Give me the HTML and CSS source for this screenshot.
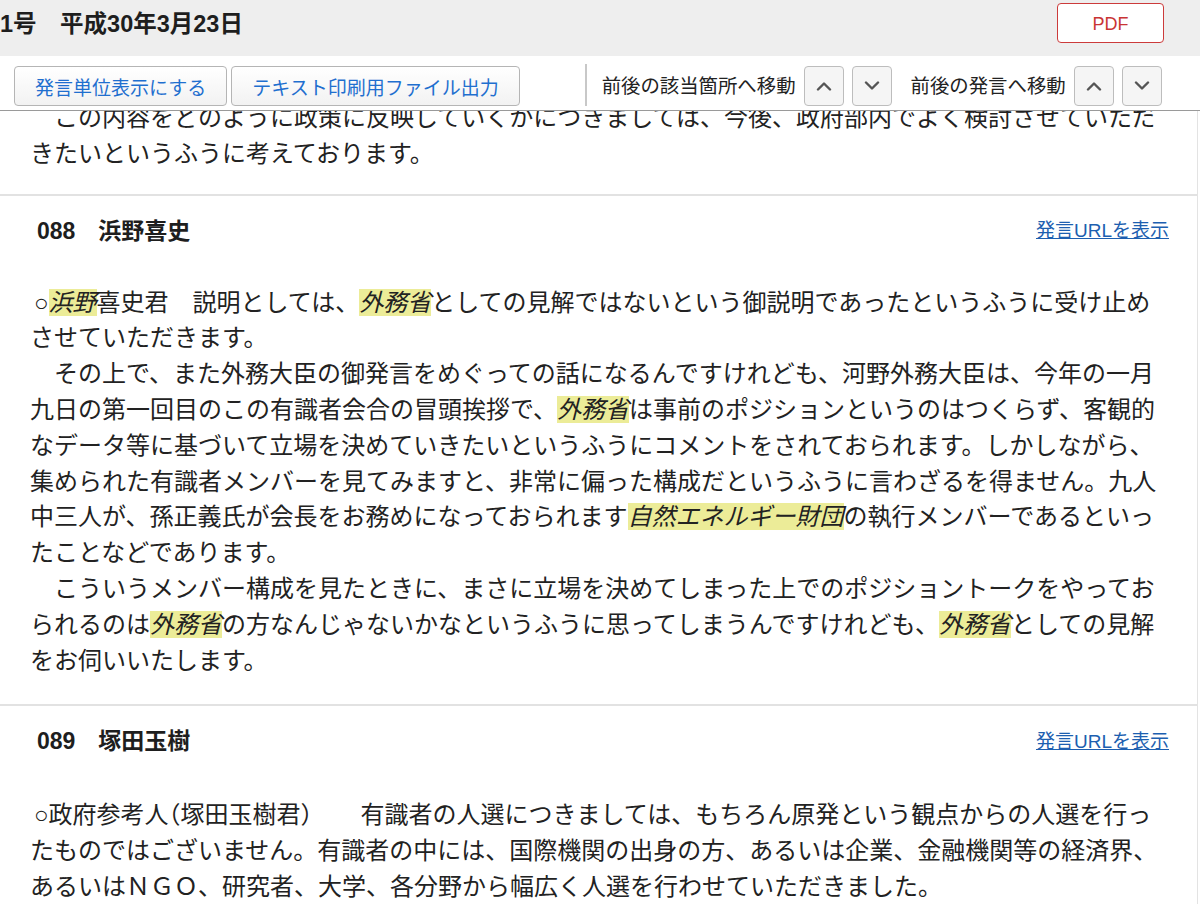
FILE: index.html
```html
<!DOCTYPE html>
<html lang="ja">
<head>
<meta charset="utf-8">
<title>会議録</title>
<link rel="stylesheet" href="styles.css">
</head>
<body>
<div class="page">
  <header class="titlebar">
    <h1 class="title">1号　平成30年3月23日</h1>
    <button class="pdf-btn">PDF</button>
  </header>
  <nav class="toolbar">
    <button class="tool-btn">発言単位表示にする</button>
    <button class="tool-btn">テキスト印刷用ファイル出力</button>
    <span class="vsep"></span>
    <span class="nav-label">前後の該当箇所へ移動</span>
    <button class="arrow-btn" aria-label="前へ"><svg viewBox="0 0 16 10" width="16" height="10"><path d="M2 8.5 L8 2.5 L14 8.5"/></svg></button>
    <button class="arrow-btn" aria-label="次へ"><svg viewBox="0 0 16 10" width="16" height="10"><path d="M2 1.5 L8 7.5 L14 1.5"/></svg></button>
    <span class="nav-label nav-label-2">前後の発言へ移動</span>
    <button class="arrow-btn" aria-label="前の発言へ"><svg viewBox="0 0 16 10" width="16" height="10"><path d="M2 8.5 L8 2.5 L14 8.5"/></svg></button>
    <button class="arrow-btn" aria-label="次の発言へ"><svg viewBox="0 0 16 10" width="16" height="10"><path d="M2 1.5 L8 7.5 L14 1.5"/></svg></button>
  </nav>
  <main class="content">
    <div class="speech speech-prev">
      <p class="speech-text">　この内容をどのように政策に反映していくかにつきましては、今後、政府部内でよく検討させていただきたいというふうに考えております。</p>
    </div>
    <section class="speech">
      <div class="speech-head">
        <h2 class="speaker">088　浜野喜史</h2>
        <a class="url-link" href="#">発言URLを表示</a>
      </div>
      <p class="speech-text"><span class="maru">○</span><em class="hl">浜野</em>喜史君　説明としては、<em class="hl">外務省</em>としての見解ではないという御説明であったというふうに受け止めさせていただきます。<br>　その上で、また外務大臣の御発言をめぐっての話になるんですけれども、河野外務大臣は、今年の一月九日の第一回目のこの有識者会合の冒頭挨拶で、<em class="hl">外務省</em>は事前のポジションというのはつくらず、客観的なデータ等に基づいて立場を決めていきたいというふうにコメントをされておられます。しかしながら、集められた有識者メンバーを見てみますと、非常に偏った構成だというふうに言わざるを得ません。九人中三人が、孫正義氏が会長をお務めになっておられます<em class="hl">自然エネルギー財団</em>の執行メンバーであるといったことなどであります。<br>　こういうメンバー構成を見たときに、まさに立場を決めてしまった上でのポジショントークをやっておられるのは<em class="hl">外務省</em>の方なんじゃないかなというふうに思ってしまうんですけれども、<em class="hl">外務省</em>としての見解をお伺いいたします。</p>
    </section>
    <section class="speech">
      <div class="speech-head">
        <h2 class="speaker">089　塚田玉樹</h2>
        <a class="url-link" href="#">発言URLを表示</a>
      </div>
      <p class="speech-text"><span class="maru">○</span>政府参考人<span class="paren">（</span>塚田玉樹君<span class="paren">）</span>　　有識者の人選につきましては、もちろん原発という観点からの人選を行ったものではございません。有識者の中には、国際機関の出身の方、あるいは企業、金融機関等の経済界、あるいはＮＧＯ、研究者、大学、各分野から幅広く人選を行わせていただきました。</p>
    </section>
  </main>
</div>
</body>
</html>
```

FILE: styles.css
```css
* {
  box-sizing: border-box;
}

html,
body {
  margin: 0;
  height: 100%;
  overflow: hidden;
  background: #fff;
}

body {
  font-family: "Liberation Sans", "Noto Sans CJK JP", sans-serif;
  color: #222;
}

.page {
  width: 1200px;
  height: 904px;
  display: flex;
  flex-direction: column;
}

.titlebar {
  flex: none;
  height: 56px;
  background: #eeeeee;
  display: flex;
  justify-content: space-between;
  align-items: flex-start;
  padding-right: 36px;
}

.title {
  margin: 0;
  font-size: 23.5px;
  font-weight: bold;
  line-height: 48px;
  white-space: nowrap;
  color: #1e1e1e;
}

.pdf-btn {
  margin-top: 3px;
  width: 107px;
  height: 40px;
  background: #fff;
  border: 1px solid #cc3b3b;
  border-radius: 4px;
  color: #c93434;
  font-size: 18px;
  font-family: inherit;
  padding: 2px 0 0 0;
}

.toolbar {
  flex: none;
  height: 55px;
  border-bottom: 1px solid #9a9a9a;
  display: flex;
  align-items: flex-start;
  padding: 10px 0 0 14px;
  background: #fff;
}

.tool-btn {
  height: 40px;
  padding: 0 20px;
  margin-right: 4px;
  border: 1px solid #b5b5b5;
  border-radius: 4px;
  background: linear-gradient(#ffffff, #f2f2f2);
  color: #1f6fcf;
  font-size: 19px;
  font-family: inherit;
}

.vsep {
  width: 2px;
  height: 42px;
  background: #c8c8c8;
  margin: -2px 15px 0 61px;
}

.nav-label {
  font-size: 19.4px;
  line-height: 40px;
  margin-right: 8px;
  color: #222;
}

.nav-label-2 {
  margin-left: 19px;
}

.arrow-btn {
  width: 40px;
  height: 40px;
  border: 1px solid #bdbdbd;
  border-radius: 4px;
  background: #f5f5f5;
  display: flex;
  align-items: center;
  justify-content: center;
  padding: 0;
}

.arrow-btn + .arrow-btn {
  margin-left: 8px;
}

.arrow-btn svg path {
  fill: none;
  stroke: #555;
  stroke-width: 2.4;
  stroke-linecap: round;
  stroke-linejoin: round;
}

.content {
  flex: 1;
  overflow: hidden;
  width: 1198px;
  border-right: 1px solid #e3e3e3;
}

.speech {
  border-top: 2px solid #e2e2e2;
  padding: 18px 0 26px 0;
}

.speech-prev {
  border-top: none;
  margin-top: -11px;
  padding: 0 0 22px 0;
}

.speech-head {
  display: flex;
  justify-content: space-between;
  align-items: center;
  height: 30px;
  padding: 0 28px 0 37px;
  margin-bottom: 41px;
}

.speaker {
  margin: 0;
  font-size: 23px;
  font-weight: bold;
  color: #1e1e1e;
}

.url-link {
  font-size: 19px;
  color: #1d5fb0;
  text-decoration: underline;
}

.speech-text {
  margin: 0;
  padding-left: 30px;
  width: 1170px;
  font-size: 24px;
  line-height: 35.8px;
}

.maru {
  padding-left: 4px;
}

.paren {
  font-family: "Noto Sans CJK JP", sans-serif;
  font-feature-settings: "halt";
}

.hl {
  font-style: italic;
  background: #ecec98;
}
```
